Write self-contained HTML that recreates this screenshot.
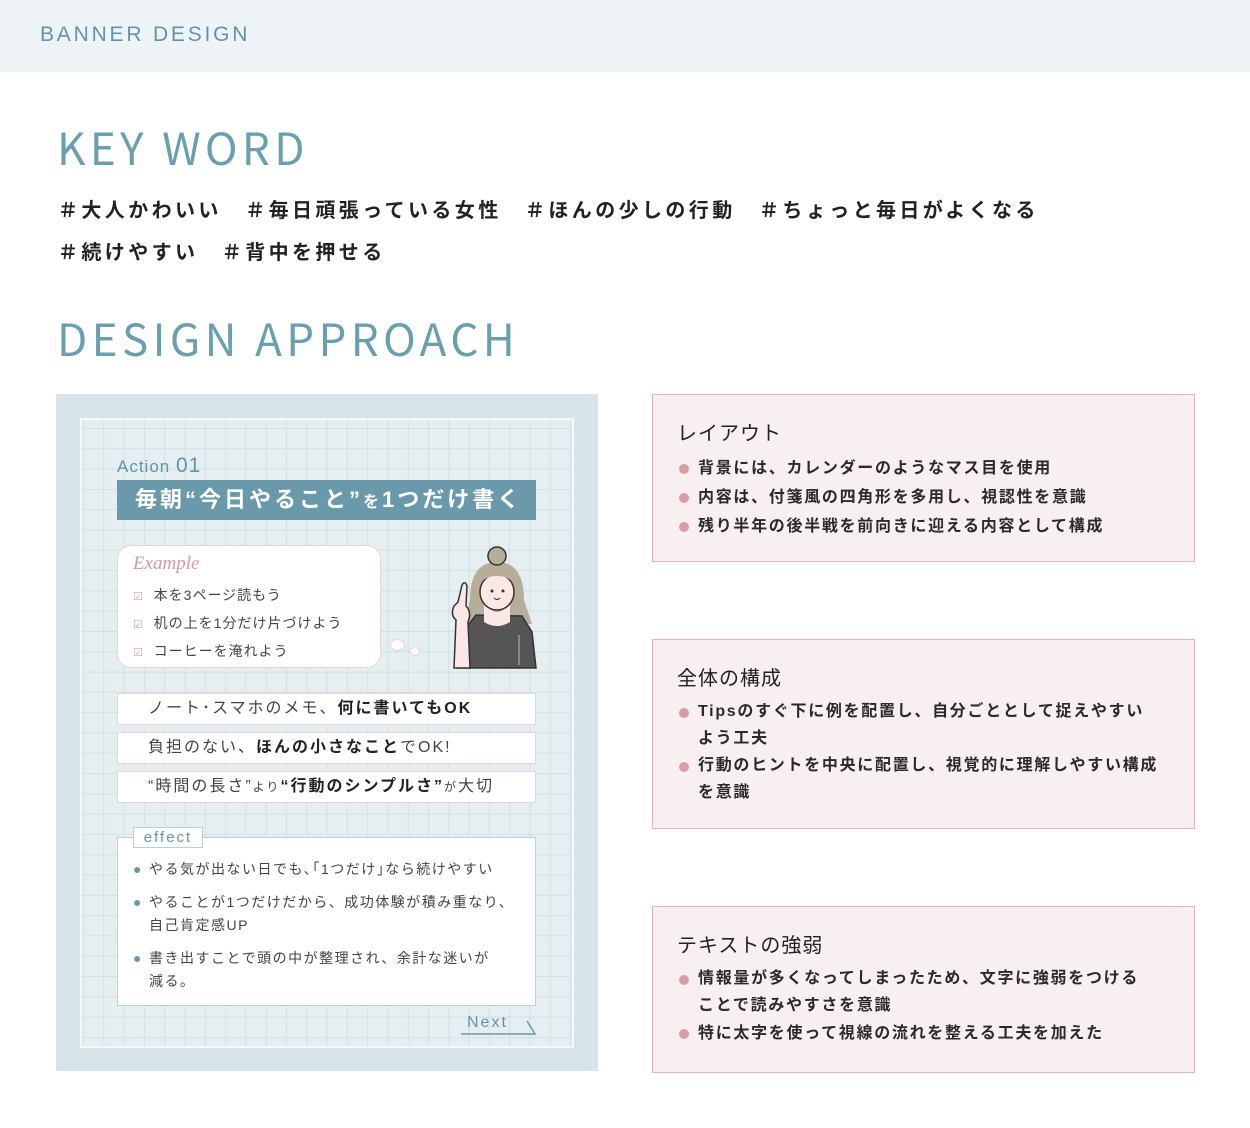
<!DOCTYPE html>
<html><head><meta charset="utf-8">
<style>
*{margin:0;padding:0;box-sizing:border-box}
body{width:1250px;height:1128px;background:#fff;font-family:"Liberation Sans","Noto Sans CJK JP",sans-serif;position:relative;overflow:hidden;color:#222}
.abs{position:absolute}
.hdr{left:0;top:0;width:1250px;height:72px;background:#eef4f6}
.hdr span{position:absolute;left:40px;top:23px;font-size:21px;letter-spacing:2.8px;color:#6195a6}
h1{position:absolute;font-weight:normal;font-size:44px;letter-spacing:4.4px;color:#6a9fb0;font-family:"Noto Sans CJK JP",sans-serif;line-height:1}
.tags{position:absolute;left:58px;font-size:20px;letter-spacing:3.4px;color:#222;font-weight:bold;line-height:1;white-space:nowrap}
.card{left:56px;top:394px;width:542px;height:677px;background:#d7e5ea}
.inner{left:80px;top:418px;width:494px;height:630px;background-color:#e5eff1;
background-image:linear-gradient(#d2e0e4 1px,transparent 1px),linear-gradient(90deg,#d2e0e4 1px,transparent 1px);background-size:20.3px 20.3px;background-position:1px 8px;border:2px solid #f3f8f9}
.box{background:#f8f0f0;border:1.5px solid #e3b7ba;left:652px;width:543px}
.box h3{position:absolute;left:24px;font-size:20px;font-weight:normal;letter-spacing:1px;color:#222}
.box ul{position:absolute;left:26px;list-style:none;font-size:16px;letter-spacing:1.7px;font-weight:bold;color:#2a2a2a}
.box li{position:relative;padding-left:19px;line-height:29px}
.box li:before{content:"";position:absolute;left:0;top:10px;width:10px;height:10px;border-radius:50%;background:#d99ea3}
.strip{left:117px;width:419px;height:32px;background:#fff;border:1.5px solid #ecd3d5;font-size:16px;letter-spacing:2px;color:#444;padding-left:30px;line-height:29px;white-space:nowrap}
.strip b{color:#222}
</style></head><body>
<div class="abs hdr"><span>BANNER DESIGN</span></div>
<h1 style="left:57px;top:124px">KEY WORD</h1>
<div class="tags" style="top:201px">＃大人かわいい　＃毎日頑張っている女性　＃ほんの少しの行動　＃ちょっと毎日がよくなる</div>
<div class="tags" style="top:243px">＃続けやすい　＃背中を押せる</div>
<h1 style="left:57px;top:315px">DESIGN APPROACH</h1>

<div class="abs card"></div>
<div class="abs inner"></div>
<div class="abs" style="left:117px;top:454px;font-size:17px;color:#5f95a6;letter-spacing:1px">Action <span style="font-size:21px">01</span></div>
<div class="abs" style="left:117px;top:480px;width:419px;height:40px;background:#6999aa;color:#fff;font-size:22px;font-weight:bold;letter-spacing:3px;line-height:40px;padding-left:18px;white-space:nowrap">毎朝“今日やること”<span style="font-size:16px">を</span>1つだけ書く</div>
<div class="abs" style="left:117px;top:545px;width:264px;height:123px;background:#fff;border:1.5px solid #ecd3d5;border-radius:14px"></div>
<div class="abs" style="left:133px;top:553px;font-family:'Liberation Serif',serif;font-style:italic;font-size:19px;color:#d7999e">Example</div>
<div class="abs" style="left:133px;top:582px;font-size:14px;letter-spacing:1px;color:#444;line-height:26px">
<div><span style="color:#d99ea3;font-size:11px">☑</span>&nbsp; 本を3ページ読もう</div>
<div><span style="color:#d99ea3;font-size:11px">☑</span>&nbsp; 机の上を1分だけ片づけよう</div>
<div><span style="color:#d99ea3;font-size:11px">☑</span>&nbsp; コーヒーを淹れよう</div></div>
<div class="abs" style="left:390px;top:639px;width:15px;height:12px;border-radius:50%;background:#fff;border:1px solid #ecd3d5"></div>
<div class="abs" style="left:410px;top:647px;width:10px;height:9px;border-radius:50%;background:#fff;border:1px solid #ecd3d5"></div>
<svg class="abs" style="left:440px;top:540px" width="100" height="130" viewBox="0 0 100 130">
<path d="M30 60 Q30 22 57 22 Q84 22 84 60 L92 84 L24 84 Z" fill="#b6ae99"/>
<circle cx="57" cy="16" r="9" fill="#b6ae99" stroke="#333" stroke-width="1.5"/>
<path d="M36 75 L26 88 L18 128 L96 128 L92 92 L82 76 Z" fill="#555" stroke="#333" stroke-width="1.5"/>
<path d="M44 62 Q57 82 70 62 L70 82 Q57 90 44 82 Z" fill="#fbe7e5"/>
<ellipse cx="57" cy="52" rx="17" ry="18" fill="#fbe7e5" stroke="#333" stroke-width="1.5"/>
<path d="M38 46 Q40 26 57 26 Q74 26 76 46 Q70 36 57 36 Q44 36 38 46Z" fill="#b6ae99"/>
<circle cx="52" cy="51" r="1.5" fill="#333"/><circle cx="63" cy="51" r="1.5" fill="#333"/>
<path d="M54 58 Q57 61 60 58" stroke="#333" fill="none" stroke-width="1.2"/>
<path d="M14 128 L16 80 Q10 75 14 66 L18 62 L22 45 Q25 40 27 46 L26 66 Q32 72 28 82 L30 128 Z" fill="#fbe7e5" stroke="#333" stroke-width="1.5"/>
<line x1="79" y1="95" x2="79" y2="125" stroke="#999" stroke-width="1.5"/>
</svg>

<div class="abs strip" style="top:693px">ノート･スマホのメモ、<b>何に書いてもOK</b></div>
<div class="abs strip" style="top:732px">負担のない、<b>ほんの小さなこと</b>でOK!</div>
<div class="abs strip" style="top:771px">“時間の長さ”<span style="font-size:12px">より</span><b>“行動のシンプルさ”</b><span style="font-size:12px">が</span>大切</div>

<div class="abs" style="left:117px;top:837px;width:419px;height:169px;background:#fff;border:1.5px solid #b9d0d8"></div>
<div class="abs" style="left:133px;top:827px;width:70px;height:21px;background:#fff;border:1.5px solid #b9d0d8;font-size:15px;color:#6195a6;letter-spacing:2px;text-align:center;line-height:19px">effect</div>
<div class="abs" style="left:133px;top:858px;font-size:14px;letter-spacing:1.5px;color:#444;line-height:23px">
<div style="position:relative;padding-left:16px"><span style="position:absolute;left:0;color:#6999aa">●</span>やる気が出ない日でも､｢1つだけ｣なら続けやすい</div>
<div style="position:relative;padding-left:16px;margin-top:10px"><span style="position:absolute;left:0;color:#6999aa">●</span>やることが1つだけだから、成功体験が積み重なり、<br>自己肯定感UP</div>
<div style="position:relative;padding-left:16px;margin-top:10px"><span style="position:absolute;left:0;color:#6999aa">●</span>書き出すことで頭の中が整理され、余計な迷いが<br>減る。</div></div>
<div class="abs" style="left:467px;top:1014px;font-size:16px;letter-spacing:2px;color:#6195a6">Next</div>
<svg class="abs" style="left:460px;top:1018px" width="80" height="18"><path d="M1 16 H75 L67 3" stroke="#6999aa" stroke-width="1.5" fill="none"/></svg>

<div class="abs box" style="top:394px;height:168px"><h3 style="top:22px">レイアウト</h3>
<ul style="top:59px"><li>背景には、カレンダーのようなマス目を使用</li><li>内容は、付箋風の四角形を多用し、視認性を意識</li><li>残り半年の後半戦を前向きに迎える内容として構成</li></ul></div>
<div class="abs box" style="top:639px;height:190px"><h3 style="top:22px">全体の構成</h3>
<ul style="top:58px;width:500px"><li style="line-height:27px">Tipsのすぐ下に例を配置し、自分ごととして捉えやすい<br>よう工夫</li><li style="line-height:27px">行動のヒントを中央に配置し、視覚的に理解しやすい構成<br>を意識</li></ul></div>
<div class="abs box" style="top:906px;height:167px"><h3 style="top:22px">テキストの強弱</h3>
<ul style="top:58px"><li style="line-height:27px">情報量が多くなってしまったため、文字に強弱をつける<br>ことで読みやすさを意識</li><li style="line-height:29px">特に太字を使って視線の流れを整える工夫を加えた</li></ul></div>
</body></html>
